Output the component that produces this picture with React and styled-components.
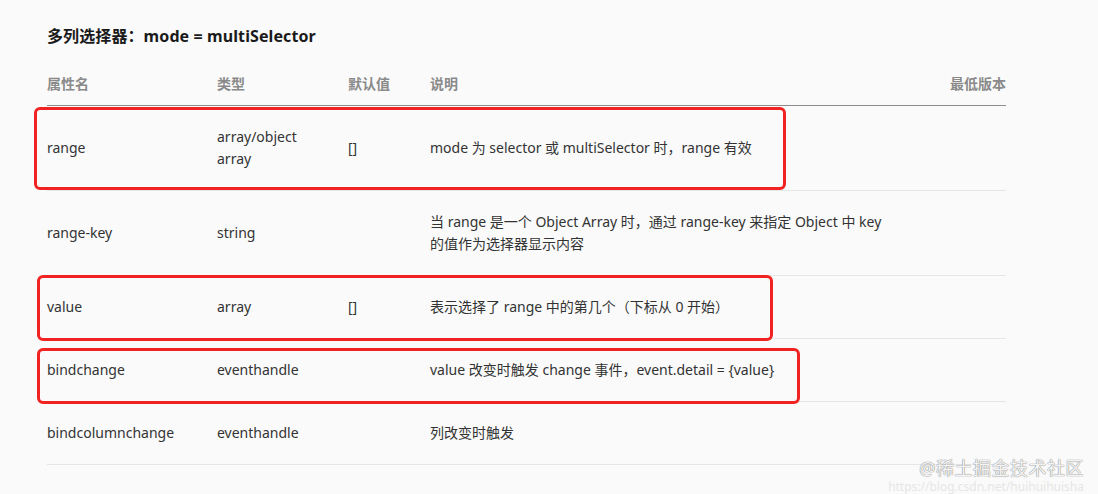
import styled, { createGlobalStyle } from "styled-components"

const GlobalStyle = createGlobalStyle`
  body {
    margin: 0;
    background: #fafafa;
    font-family: "Noto Sans", "Noto Sans CJK SC", sans-serif;
    color: #333;
  }
`

const Page = styled.div`
  position: relative;
  height: 494px;
  overflow: hidden;
  padding: 24px 0 0 47px;
  box-sizing: border-box;
`

const Title = styled.h3`
  margin: 0 0 14px;
  font-size: 16px;
  line-height: 24px;
  font-weight: 700;
  color: #1a1a1a;
  letter-spacing: 0.1px;
`

const Table = styled.div`
  width: 959px;
  font-size: 14px;
`

const Row = styled.div`
  position: relative;
  display: grid;
  grid-template-columns: 170px 131px 82px 462px 1fr;
  align-items: center;
  padding: ${p => (p.$head ? "11px 0 10px" : "20px 0")};
  line-height: 22px;
  border-bottom: 1px solid ${p => (p.$head ? "#8c8c8c" : "#e6e6e6")};
  color: ${p => (p.$head ? "#8a8a8a" : "#333")};
  font-weight: ${p => (p.$head ? 700 : 400)};
`

const Cell = styled.div`
  text-align: ${p => (p.$right ? "right" : "left")};
`

const Highlight = styled.div`
  position: absolute;
  border: 3px solid #f02222;
  border-radius: 6px;
  box-sizing: border-box;
  pointer-events: none;
`

const Watermark = styled.div`
  position: absolute;
  right: 14px;
  bottom: 0;
  text-align: right;
  line-height: 1;
`

const WatermarkMain = styled.div`
  font-size: 18px;
  line-height: 20px;
  color: #f4f4f4;
  text-shadow: 0 0 1px #888, 0 0 1px #888;
  letter-spacing: 0.5px;
`

const WatermarkUrl = styled.div`
  margin-top: 2px;
  font-size: 12px;
  line-height: 14px;
  color: #e6e6e6;
`

const rows = [
  { name: "range", type: ["array/object", "array"], def: "[]", desc: "mode 为 selector 或 multiSelector 时，range 有效", box: { left: -13, top: 1, width: 752, height: 83 } },
  { name: "range-key", type: ["string"], def: "", desc: "当 range 是一个 Object Array 时，通过 range-key 来指定 Object 中 key 的值作为选择器显示内容" },
  { name: "value", type: ["array"], def: "[]", desc: "表示选择了 range 中的第几个（下标从 0 开始）", box: { left: -10, top: -1, width: 736, height: 66 } },
  { name: "bindchange", type: ["eventhandle"], def: "", desc: "value 改变时触发 change 事件，event.detail = {value}", box: { left: -10, top: 9, width: 763, height: 56 } },
  { name: "bindcolumnchange", type: ["eventhandle"], def: "", desc: "列改变时触发" },
]

const App = () => {
  return (
    <Page>
      <GlobalStyle />
      <Title>多列选择器：mode = multiSelector</Title>
      <Table>
        <Row $head>
          <Cell>属性名</Cell>
          <Cell>类型</Cell>
          <Cell>默认值</Cell>
          <Cell>说明</Cell>
          <Cell $right>最低版本</Cell>
        </Row>
        {rows.map(r => (
          <Row key={r.name}>
            <Cell>{r.name}</Cell>
            <Cell>
              {r.type.map(t => (
                <div key={t}>{t}</div>
              ))}
            </Cell>
            <Cell>{r.def}</Cell>
            <Cell>{r.desc}</Cell>
            <Cell $right></Cell>
            {r.box && <Highlight style={r.box} />}
          </Row>
        ))}
      </Table>
      <Watermark>
        <WatermarkMain>@稀土掘金技术社区</WatermarkMain>
        <WatermarkUrl>https://blog.csdn.net/huihuihuisha</WatermarkUrl>
      </Watermark>
    </Page>
  )
}

export default App
